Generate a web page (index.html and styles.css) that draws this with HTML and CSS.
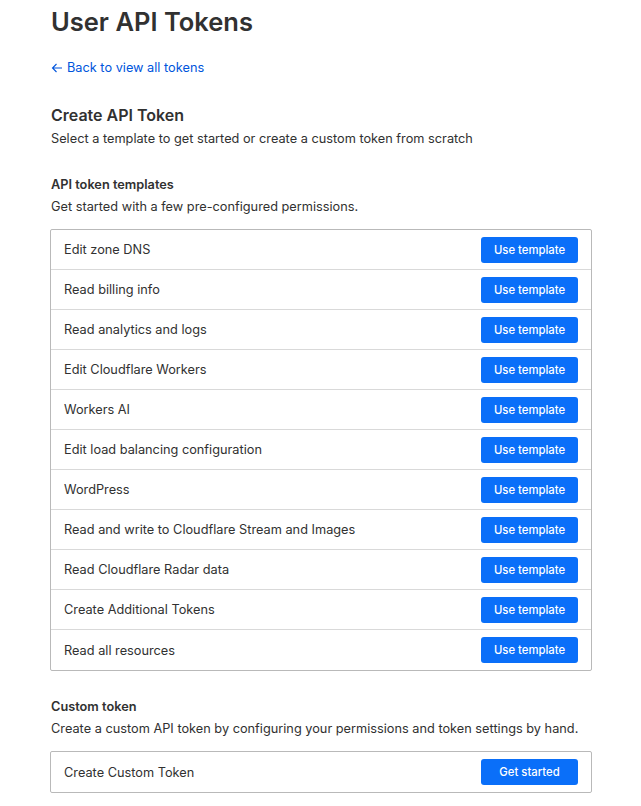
FILE: index.html
```html
<!DOCTYPE html>
<html lang="en">
<head>
<meta charset="utf-8">
<title>User API Tokens</title>
<link rel="stylesheet" href="styles.css">
</head>
<body>
<main class="page">
  <h1 class="title">User API Tokens</h1>
  <a class="back" href="#">
    <svg class="back-icon" width="12" height="12" viewBox="0 0 12 12" aria-hidden="true"><path d="M11 6H1.5M5.5 2L1.5 6l4 4" fill="none" stroke="currentColor" stroke-width="1.1"/></svg>
    Back to view all tokens
  </a>

  <section class="section-main">
    <h2 class="h2">Create API Token</h2>
    <p class="desc">Select a template to get started or create a custom token from scratch</p>
  </section>

  <section class="section">
    <h3 class="h3">API token templates</h3>
    <p class="desc">Get started with a few pre-configured permissions.</p>
    <ul class="list">
      <li class="row"><span>Edit zone DNS</span><button class="btn">Use template</button></li>
      <li class="row"><span>Read billing info</span><button class="btn">Use template</button></li>
      <li class="row"><span>Read analytics and logs</span><button class="btn">Use template</button></li>
      <li class="row"><span>Edit Cloudflare Workers</span><button class="btn">Use template</button></li>
      <li class="row"><span>Workers AI</span><button class="btn">Use template</button></li>
      <li class="row"><span>Edit load balancing configuration</span><button class="btn">Use template</button></li>
      <li class="row"><span>WordPress</span><button class="btn">Use template</button></li>
      <li class="row"><span>Read and write to Cloudflare Stream and Images</span><button class="btn">Use template</button></li>
      <li class="row"><span>Read Cloudflare Radar data</span><button class="btn">Use template</button></li>
      <li class="row"><span>Create Additional Tokens</span><button class="btn">Use template</button></li>
      <li class="row"><span>Read all resources</span><button class="btn">Use template</button></li>
    </ul>
  </section>

  <section class="section section-custom">
    <h3 class="h3">Custom token</h3>
    <p class="desc">Create a custom API token by configuring your permissions and token settings by hand.</p>
    <ul class="list">
      <li class="row"><span>Create Custom Token</span><button class="btn">Get started</button></li>
    </ul>
  </section>
</main>
</body>
</html>
```
FILE: styles.css
```css
* { box-sizing: border-box; }
html, body { margin: 0; padding: 0; background: #fff; }
body {
  font-family: Inter, "Noto Sans", sans-serif;
  color: #313131;
  font-size: 12.75px;
}
.page {
  width: 542px;
  margin-left: 50px;
  padding-top: 4px;
}
.title {
  margin: 0 0 0 1px;
  font-size: 25.5px;
  line-height: 36px;
  font-weight: 600;
  color: #313131;
}
.back {
  display: inline-flex;
  align-items: center;
  gap: 4px;
  margin-top: 18px;
  margin-left: 1px;
  line-height: 20px;
  font-size: 12.75px;
  color: #0055dc;
  text-decoration: none;
}
.back-icon { display: block; }
.section-main { margin-top: 26px; }
.h2 {
  margin: 0 0 0 1px;
  font-size: 16px;
  line-height: 22px;
  font-weight: 600;
}
.desc {
  margin: 4px 0 0 1px;
  line-height: 18px;
  font-size: 12.75px;
}
.section { margin-top: 28px; }
.h3 {
  margin: 0 0 0 1px;
  font-size: 12.75px;
  line-height: 18px;
  font-weight: 600;
}
.section .desc { margin-top: 4px; }
.list {
  list-style: none;
  margin: 13px 0 0;
  padding: 0;
  border: 1px solid #b9b9b9;
  border-radius: 2px;
}
.row {
  display: flex;
  align-items: center;
  justify-content: space-between;
  height: 40px;
  padding: 0 13px;
  border-bottom: 1px solid #d9d9d9;
}
.row:last-child { border-bottom: 0; }
.btn {
  width: 97px;
  height: 26px;
  border: 0;
  border-radius: 3px;
  background: #0a6ff9;
  color: #fff;
  font-family: Inter, "Noto Sans", sans-serif;
  font-size: 11.3px;
  font-weight: 500;
  padding: 0;
}
.section-custom { margin-top: 27px; }
```
